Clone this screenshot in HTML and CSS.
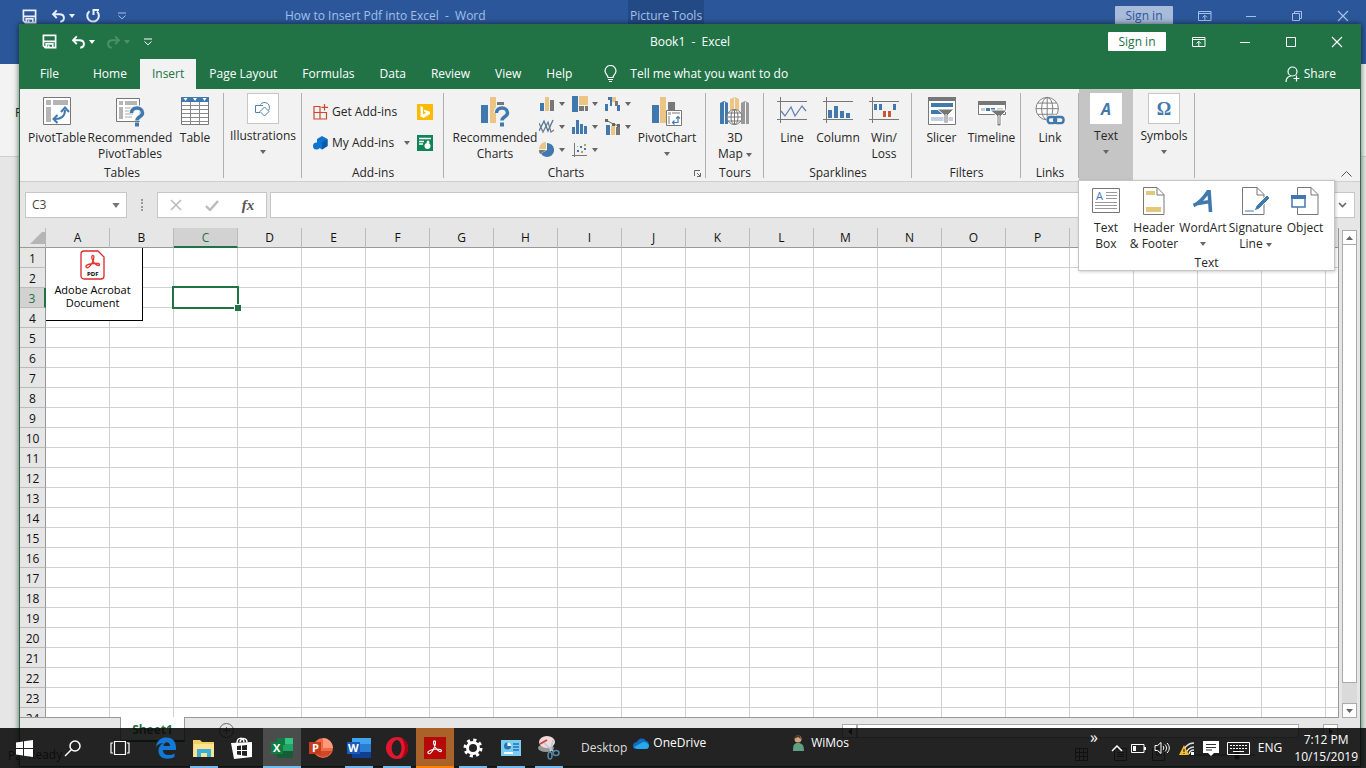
FILE: index.html
```
<!DOCTYPE html>
<html lang="en">
<head>
  <meta charset="utf-8">
  <title>Book1 - Excel</title>
  <link rel="stylesheet" href="styles.css">
</head>
<body>
  <!-- shared icons -->
  <svg class="defs" width="0" height="0">
    <symbol id="save" viewBox="0 0 16 16"><path d="M2 1.500h12.500v13H3.500L1.500 12.500V1.500zM2 7.800h12M4.500 14.500v-4h7v4" fill="none" stroke="currentColor" stroke-width="1.800"/><path d="M6 12h2v3H6z" fill="currentColor"/></symbol>
    <symbol id="undo" viewBox="0 0 16 16"><path d="M2 6h7c7 0 6.500 8 1 8.500M6 1.500L1.800 6 6 10.500" fill="none" stroke="currentColor" stroke-width="2.200"/></symbol>
    <symbol id="redo" viewBox="0 0 16 16"><path d="M14 6H7c-7 0-6.500 8-1 8.500M10 1.500L14.200 6 10 10.500" fill="none" stroke="currentColor" stroke-width="2.200"/></symbol>
    <symbol id="repeat" viewBox="0 0 16 16"><path d="M4.500 3.200A5.800 5.800 0 1 0 12 3.500M8.500 1v6M8 2h6" fill="none" stroke="currentColor" stroke-width="2"/></symbol>
    <symbol id="more" viewBox="0 0 10 8"><path d="M1 1h8M1.500 3.500L5 6.800 8.500 3.500" fill="none" stroke="currentColor"/></symbol>
    <symbol id="down" viewBox="0 0 6 4"><path d="M0 0h6L3 4z" fill="currentColor"/></symbol>
    <symbol id="ribbonopt" viewBox="0 0 14 12"><path d="M.5 1.500h12.500v9H.5zM.5 3.500H13M6.800 10V5.500M4.500 7.500l2.300-2.300 2.300 2.300" fill="none" stroke="currentColor"/></symbol>
    <symbol id="min" viewBox="0 0 12 12"><path d="M1 6.500h10" stroke="currentColor"/></symbol>
    <symbol id="max" viewBox="0 0 12 12"><path d="M1.500 1.500h9v9h-9z" fill="none" stroke="currentColor"/></symbol>
    <symbol id="restore" viewBox="0 0 12 12"><path d="M1.500 3.500h7v7h-7zM3.500 3V1.500h7v7H9" fill="none" stroke="currentColor"/></symbol>
    <symbol id="close" viewBox="0 0 12 12"><path d="M1 1l10 10M11 1L1 11" stroke="currentColor" stroke-width="1.200"/></symbol>
  </svg>

  <div class="window word">
    <header class="word-title">
      <div class="quick">
        <button class="q-btn" aria-label="Save"><svg width="15" height="15"><use href="#save"/></svg></button>
        <button class="q-btn" aria-label="Undo"><svg width="15" height="14"><use href="#undo"/></svg></button>
        <svg class="q-arrow" width="6" height="4"><use href="#down"/></svg>
        <button class="q-btn" aria-label="Repeat"><svg width="16" height="16"><use href="#repeat"/></svg></button>
        <button class="q-btn" aria-label="Customize"><svg width="10" height="8"><use href="#more"/></svg></button>
      </div>
      <h2 class="doc-name">How to Insert Pdf into Excel&nbsp; -&nbsp; Word</h2>
      <span class="picture-tools">Picture Tools</span>
      <button class="sign-in">Sign in</button>
      <button class="win-btn" aria-label="Ribbon options"><svg width="14" height="12"><use href="#ribbonopt"/></svg></button>
      <button class="win-btn" aria-label="Minimize"><svg width="12" height="12"><use href="#min"/></svg></button>
      <button class="win-btn" aria-label="Restore"><svg width="12" height="12"><use href="#restore"/></svg></button>
      <button class="win-btn" aria-label="Close"><svg width="12" height="12"><use href="#close"/></svg></button>
    </header>
    <div class="word-ribbon">Paste</div>
    <div class="word-status">Page</div>
  </div>

  <div class="window excel">
    <header class="title-bar">
      <div class="quick">
        <button class="q-btn" aria-label="Save"><svg width="15" height="15"><use href="#save"/></svg></button>
        <button class="q-btn" aria-label="Undo"><svg width="15" height="14"><use href="#undo"/></svg></button>
        <svg class="q-arrow" width="6" height="4"><use href="#down"/></svg>
        <button class="q-btn dim" aria-label="Redo"><svg width="15" height="14"><use href="#redo"/></svg></button>
        <svg class="q-arrow dim" width="6" height="4"><use href="#down"/></svg>
        <button class="q-btn" aria-label="Customize"><svg width="10" height="8"><use href="#more"/></svg></button>
      </div>
      <h1 class="book-name">Book1&nbsp; -&nbsp; Excel</h1>
      <button class="sign-in">Sign in</button>
      <button class="win-btn" aria-label="Ribbon options"><svg width="14" height="12"><use href="#ribbonopt"/></svg></button>
      <button class="win-btn" aria-label="Minimize"><svg width="12" height="12"><use href="#min"/></svg></button>
      <button class="win-btn" aria-label="Maximize"><svg width="12" height="12"><use href="#max"/></svg></button>
      <button class="win-btn" aria-label="Close"><svg width="12" height="12"><use href="#close"/></svg></button>
    </header>

    <nav class="tabs">
      <button class="tab file">File</button>
      <button class="tab">Home</button>
      <button class="tab active">Insert</button>
      <button class="tab">Page Layout</button>
      <button class="tab">Formulas</button>
      <button class="tab">Data</button>
      <button class="tab">Review</button>
      <button class="tab">View</button>
      <button class="tab">Help</button>
      <button class="tell-me">
        <svg width="13" height="18" viewBox="0 0 13 18" fill="none" stroke="currentColor"><path d="M4 12.500C4 10 1 9 1 6a5.500 5.500 0 0 1 11 0c0 3-3 4-3 6.500zM4 14.500h5M5 16.500h3" stroke-width="1.200"/></svg>
        Tell me what you want to do
      </button>
      <button class="share">
        <svg width="15" height="17" viewBox="0 0 15 17" fill="none" stroke="currentColor" stroke-width="1.200"><circle cx="7.500" cy="5.500" r="4.500"/><path d="M1 16c0-3.500 2-5.500 5-6M8.500 12.500h6M11.500 9.500v6"/></svg>
        Share
      </button>
    </nav>

    <div class="ribbon">
      <section class="group tables">
        <div class="items">
          <button class="big">
            <svg width="28" height="28" viewBox="0 0 28 28"><path d="M.5.500h27v27H.5z" fill="#fff" stroke="#777"/><path d="M3 3h5v5H3zM10 3h15v5H10zM3 10h5v15H3z" fill="#b5b5b5"/><path d="M12 22c7 0 10-3 10-9" fill="none" stroke="#4179ae" stroke-width="2"/><path d="M14.500 18L10.500 22l4 4M18 15l4-4.500 4 4.500" fill="none" stroke="#4179ae" stroke-width="2"/></svg>
            <span>PivotTable</span>
          </button>
          <button class="big wide">
            <svg width="28" height="28" viewBox="0 0 28 28"><path d="M.5 1.500h23v23H.5z" fill="#fff" stroke="#777"/><path d="M3 4h4v4H3zM9 4h12v4H9zM3 10h4v12H3z" fill="#b5b5b5"/><path d="M9 11h8M9 14h7M9 17h8M9 20h7" stroke="#aaa"/><path d="M15.500 16c0-7 11-6.500 11 0 0 4-5.500 3.500-5.500 8" fill="none" stroke="#f2f2f2" stroke-width="6"/><path d="M15.500 16c0-7 11-6.500 11 0 0 4-5.500 3.500-5.500 7.500" fill="none" stroke="#4179ae" stroke-width="3.500"/><path d="M19 25.500h4v4h-4z" fill="#4179ae"/></svg>
            <span>Recommended<br>PivotTables</span>
          </button>
          <button class="big narrow">
            <svg width="28" height="28" viewBox="0 0 28 28"><path d="M.5.500h27v27H.5z" fill="#fff" stroke="#777"/><path d="M0 0h28v5H0z" fill="#4179ae"/><path d="M2.500 1h4l-2 3zM12 1h4l-2 3zM21.500 1h4l-2 3z" fill="#fff"/><path d="M1 8.500h26M1 12.500h26M1 16.500h26M1 20.500h26M1 24.500h26M9.500 5v22M18.500 5v22" stroke="#8a8a8a"/></svg>
            <span>Table</span>
          </button>
        </div>
        <div class="group-name">Tables</div>
      </section>

      <section class="group illustrations">
        <button class="collapsed">
          <span class="tile"><svg width="18" height="16" viewBox="0 0 18 16" fill="none" stroke="#4f80aa"><path d="M6 11.500H1.500v-7H9"/><path d="M6.500 3.500a5 5 0 1 1 8 6"/><path d="M10.500 6l4.500 4.500-4.500 4.500L6 10.500z"/></svg></span>
          Illustrations
          <svg class="arrow" width="6" height="4"><use href="#down"/></svg>
        </button>
      </section>

      <section class="group addins">
        <div class="items addin-list">
          <button class="small">
            <svg width="16" height="16" viewBox="0 0 16 16" fill="none" stroke="#c8492c" stroke-width="1.200"><path d="M1 2.500h6v12.500H1zM1 8.500h12.500V15H7V8.500M11.500 0v6.500M8.500 3.300h6.500"/></svg>
            Get Add-ins
          </button>
          <button class="square" aria-label="Bing Maps"><svg width="16" height="16" viewBox="0 0 16 16"><path d="M0 0h16v16H0z" fill="#fbb900"/><path d="M3.500 2l2.500 1v7.500l3-1.800-1.600-1L6.500 5.500l6.500 2.200V10l-6.500 4-3-1.500z" fill="#fff"/></svg></button>
          <button class="small">
            <svg width="16" height="16" viewBox="0 0 16 16"><path d="M9 1l5.500 3v7L9 14.500 4 11.500V4z" fill="#0c74d0"/><path d="M9 7.500l5.500-3.500v7L9 14.500z" fill="#075ba9"/><circle cx="3.500" cy="11" r="3.500" fill="#0c74d0"/></svg>
            My Add-ins
            <svg class="arrow" width="6" height="4"><use href="#down"/></svg>
          </button>
          <button class="square" aria-label="People Graph"><svg width="16" height="16" viewBox="0 0 16 16"><path d="M0 0h16v16H0z" fill="#0f8457"/><path d="M2 3.500h12M2 6.500h5M2 9h4" stroke="#fff" stroke-width="1.300"/><circle cx="11" cy="7" r="1.500" fill="#fff"/><circle cx="10.500" cy="11" r="3" fill="#fff"/></svg></button>
        </div>
        <div class="group-name">Add-ins</div>
      </section>

      <section class="group charts">
        <div class="items">
          <button class="big wide">
            <svg width="28" height="28" viewBox="0 0 28 28"><path d="M0 8h7v18H0z" fill="#4179ae"/><path d="M9 0h6v26H9z" fill="#ecc483"/><path d="M16 5h7v3h-7z" fill="#777"/><path d="M15.500 16c0-7 11-6.500 11 0 0 4-5.500 3.500-5.500 8" fill="none" stroke="#f2f2f2" stroke-width="6"/><path d="M15.500 16c0-7 11-6.500 11 0 0 4-5.500 3.500-5.500 7.500" fill="none" stroke="#4179ae" stroke-width="3.500"/><path d="M19 25.500h4v4h-4z" fill="#4179ae"/></svg>
            <span>Recommended<br>Charts</span>
          </button>
          <div class="chart-grid">
            <button class="chart-btn" aria-label="Column chart"><svg width="16" height="16" viewBox="0 0 16 16"><path d="M1 7h4v8H1z" fill="#4179ae"/><path d="M6 1h4v14H6z" fill="#ecc483"/><path d="M11 4h4v11h-4z" fill="#777"/></svg><svg class="arrow" width="6" height="4"><use href="#down"/></svg></button>
            <button class="chart-btn" aria-label="Hierarchy chart"><svg width="16" height="16" viewBox="0 0 16 16"><path d="M0 0h6v16H0z" fill="#4179ae"/><path d="M7 0h9v9H7z" fill="#ecc483"/><path d="M7 10h5v5H7zM13 10h3v5h-3z" fill="#777"/></svg><svg class="arrow" width="6" height="4"><use href="#down"/></svg></button>
            <button class="chart-btn" aria-label="Waterfall chart"><svg width="16" height="16" viewBox="0 0 16 16"><path d="M0 8h3v7H0zM3 1h4v9H5V4H3zM12 9h3v6h-3z" fill="#4179ae"/><path d="M7 1h4v5H7z" fill="#ecc483"/><path d="M10 5h3v5h-3z" fill="#777"/></svg><svg class="arrow" width="6" height="4"><use href="#down"/></svg></button>
            <button class="chart-btn" aria-label="Line chart"><svg width="16" height="16" viewBox="0 0 16 16" fill="none"><path d="M0 12L5 2l4 10 5-11" stroke="#4179ae" stroke-width="1.300"/><path d="M0 4l4 9 5-10 3 10 3-2" stroke="#777" stroke-width="1.200"/></svg><svg class="arrow" width="6" height="4"><use href="#down"/></svg></button>
            <button class="chart-btn" aria-label="Statistic chart"><svg width="16" height="16" viewBox="0 0 16 16"><path d="M0 8h3v7H0zM4 1h3v14H4zM8 5h3v10H8zM12 7h3v8h-3z" fill="#4179ae"/></svg><svg class="arrow" width="6" height="4"><use href="#down"/></svg></button>
            <button class="chart-btn" aria-label="Combo chart"><svg width="16" height="16" viewBox="0 0 16 16"><path d="M1 6h4v10H1z" fill="#4179ae"/><path d="M6 7h4v9H6z" fill="#ecc483"/><path d="M11 8h4v8h-4z" fill="#777"/><path d="M1 1l7 4 6 2" fill="none" stroke="#666"/><path d="M0 0h3v3H0zM7 4h3v3H7zM12 5h3v3h-3z" fill="#666"/></svg><svg class="arrow" width="6" height="4"><use href="#down"/></svg></button>
            <button class="chart-btn" aria-label="Pie chart"><svg width="16" height="16" viewBox="0 0 16 16"><path d="M8 8V1a7 7 0 1 1-6 10.500z" fill="#4179ae"/><path d="M7 7V0a7 7 0 0 0-7 7z" fill="#ecc483"/><path d="M7 8H0c0 2 .5 3 1.200 4z" fill="#777"/></svg><svg class="arrow" width="6" height="4"><use href="#down"/></svg></button>
            <button class="chart-btn" aria-label="Scatter chart"><svg width="16" height="16" viewBox="0 0 16 16"><path d="M2.500 1v14M0 13.500h15" stroke="#777"/><path d="M5 8h2v2H5zM8 4h2v2H8zM12 6h2v2h-2z" fill="#4179ae"/><path d="M9 9h2v2H9zM12 2h2v2h-2zM5 4h1v1H5z" fill="#c49a59"/></svg><svg class="arrow" width="6" height="4"><use href="#down"/></svg></button>
          </div>
          <button class="big pivot-chart">
            <svg width="30" height="28" viewBox="0 0 30 28"><path d="M0 8h7v18H0z" fill="#4179ae"/><path d="M8 0h6v26H8z" fill="#ecc483"/><path d="M16 5h7v8h-7z" fill="#777"/><path d="M14.500 13.500h15v15h-15z" fill="#fff" stroke="#777"/><path d="M16 15h3v3h-3zM20 15h8v2h-8zM16 19h2v8h-2z" fill="#bbb"/><path d="M20.500 25.500H26V20M22.500 23.500l-2 2 2 2M24 21.500l2-2 2 2" fill="none" stroke="#4179ae" stroke-width="1.200"/></svg>
            <span>PivotChart</span>
            <svg class="arrow" width="6" height="4"><use href="#down"/></svg>
          </button>
        </div>
        <div class="group-name">Charts</div>
        <button class="launcher" aria-label="Chart options"><svg width="7" height="7" viewBox="0 0 7 7"><path d="M.5 6V.500H6M3 3l3 3M6.500 3v3.500H3" fill="none" stroke="#666"/></svg></button>
      </section>

      <section class="group tours">
        <div class="items">
          <button class="big">
            <svg width="30" height="28" viewBox="0 0 30 28"><path d="M0 6l4-2 4 2v21H0z" fill="#4179ae"/><path d="M10 2l5-2 4 2v14h-9z" fill="#ecc483"/><path d="M21 6l4-2 4 2v21h-8z" fill="#999"/><path d="M4.500 5v22M14.500 1v14M25.500 5v22" stroke="#f2f2f2"/><circle cx="14.500" cy="20" r="7.500" fill="#fff" stroke="#777"/><ellipse cx="14.500" cy="20" rx="3.500" ry="7.500" fill="none" stroke="#777"/><path d="M7 20h15M8.500 16h12M8.500 24h12M14.500 13v14" stroke="#777"/></svg>
            <span>3D<br>Map <svg class="inline-arrow" width="6" height="4"><use href="#down"/></svg></span>
          </button>
        </div>
        <div class="group-name">Tours</div>
      </section>

      <section class="group sparklines">
        <div class="items">
          <button class="big">
            <svg width="30" height="28" viewBox="0 0 30 28" fill="none"><path d="M0 4.500h30M0 22.500h30M3.500 0v26" stroke="#777"/><path d="M4 14l4 5 6-9 4 9 7-10 4 5" stroke="#6484b0" stroke-width="1.300"/></svg>
            <span>Line</span>
          </button>
          <button class="big">
            <svg width="30" height="28" viewBox="0 0 30 28"><path d="M5 13h4v8H5zM11 9h4v12h-4zM17 14h4v7h-4zM23 16h4v5h-4z" fill="#4179ae"/><path d="M0 4.500h30M0 22.500h30M3.500 0v26" stroke="#777"/></svg>
            <span>Column</span>
          </button>
          <button class="big">
            <svg width="30" height="28" viewBox="0 0 30 28"><path d="M5 7h3v6H5zM10 7h3v6h-3zM24 7h3v6h-3z" fill="#4179ae"/><path d="M14 14h3v6h-3zM19 14h3v6h-3z" fill="#c8573a"/><path d="M0 4.500h30M0 22.500h30M3.500 0v26" stroke="#777"/></svg>
            <span>Win/<br>Loss</span>
          </button>
        </div>
        <div class="group-name">Sparklines</div>
      </section>

      <section class="group filters">
        <div class="items">
          <button class="big">
            <svg width="28" height="28" viewBox="0 0 28 28"><path d="M.5.500h27v27H.5z" fill="#fff" stroke="#777"/><path d="M0 0h28v4H0z" fill="#777"/><path d="M3 6h22v4H3zM3 13h12v4H3z" fill="#4179ae"/><path d="M3 20h22v4H3z" fill="#c5cfdf"/><path d="M9 12h17l-6 6v8h-4v-8z" fill="#777" stroke="#fff"/><path d="M18 17v8" stroke="#fff"/></svg>
            <span>Slicer</span>
          </button>
          <button class="big">
            <svg width="28" height="28" viewBox="0 0 28 28"><path d="M.5 4.500h27v13H.5z" fill="#fff" stroke="#777"/><path d="M0 4h28v4H0z" fill="#777"/><path d="M3 11h4v3H3zM19 11h6v3h-6z" fill="#ccc"/><path d="M8 11h4v3H8zM13 11h4v3h-4z" fill="#4179ae"/><path d="M12 13h17l-6 6v10h-4V19z" fill="#777" stroke="#fff"/><path d="M21 18v9" stroke="#fff"/></svg>
            <span>Timeline</span>
          </button>
        </div>
        <div class="group-name">Filters</div>
      </section>

      <section class="group links">
        <div class="items">
          <button class="big">
            <svg width="32" height="30" viewBox="0 0 32 30" fill="none"><circle cx="13" cy="12.500" r="12" fill="#fff" stroke="#777"/><ellipse cx="13" cy="12.500" rx="6" ry="12" stroke="#777"/><path d="M13 .5v24M1 12.500h24M3 6.500h20M3 18.500h20" stroke="#777"/><rect x="12" y="19" width="20" height="11" rx="5" fill="#f2f2f2"/><g stroke="#4179ae" stroke-width="2.600"><rect x="13.500" y="21.500" width="9" height="6.500" rx="3"/><rect x="20.500" y="21.500" width="10" height="6.500" rx="3"/></g></svg>
            <span>Link</span>
          </button>
        </div>
        <div class="group-name">Links</div>
      </section>

      <section class="group text-group">
        <button class="collapsed open">
          <span class="tile letter">A</span>
          Text
          <svg class="arrow" width="6" height="4"><use href="#down"/></svg>
        </button>
        <div class="menu">
          <div class="menu-items">
            <button class="big text-box">
              <svg width="28" height="28" viewBox="0 0 28 28"><path d="M.5 1.500h27v24H.5z" fill="#fff" stroke="#777"/><path d="M14 5.500h11M14 8.500h11M14 11.500h11M3 15.500h22M3 18.500h22M3 21.500h22" stroke="#999"/><text x="4" y="13" class="a-icon">A</text></svg>
              <span>Text<br>Box</span>
            </button>
            <button class="big header-footer">
              <svg width="22" height="28" viewBox="0 0 22 28"><path d="M.5.500H14l7 7v20H.5z" fill="#fff" stroke="#777"/><path d="M14 .5V8h7" fill="none" stroke="#777"/><path d="M3 4h9v4H3zM3 20h15v5H3z" fill="#e2c77d"/></svg>
              <span>Header<br>&amp; Footer</span>
            </button>
            <button class="big">
              <svg width="22" height="28" viewBox="0 0 22 28"><path d="M1.500 18.500C8 16 12 11 16.500 4M17 3l1.500 22M6 16.500l12-2" fill="none" stroke="#4179ae" stroke-width="3.600"/></svg>
              <span>WordArt</span>
              <svg class="arrow" width="6" height="4"><use href="#down"/></svg>
            </button>
            <button class="big signature">
              <svg width="28" height="28" viewBox="0 0 28 28"><path d="M.5.500H15l7 7v20H.5z" fill="#fff" stroke="#777"/><path d="M15 .5V8h7" fill="none" stroke="#777"/><path d="M3 24h9" stroke="#4179ae"/><path d="M12 24l2-5L25 8l3 3-11 11z" fill="#4179ae" stroke="#fff"/></svg>
              <span>Signature<br>Line <svg class="inline-arrow" width="6" height="4"><use href="#down"/></svg></span>
            </button>
            <button class="big object">
              <svg width="28" height="28" viewBox="0 0 28 28"><path d="M6.500.500H20l7 7v20H6.500z" fill="#fff" stroke="#777"/><path d="M20 .5V8h7" fill="none" stroke="#777"/><path d="M1 9h13v11H1z" fill="#fff" stroke="#4179ae" stroke-width="1.500"/><path d="M0 8h15v4H0z" fill="#4179ae"/></svg>
              <span>Object</span>
            </button>
          </div>
          <div class="group-name">Text</div>
        </div>
      </section>

      <section class="group symbols">
        <button class="collapsed">
          <span class="tile omega">Ω</span>
          Symbols
          <svg class="arrow" width="6" height="4"><use href="#down"/></svg>
        </button>
      </section>
      <button class="collapse" aria-label="Collapse the ribbon"><svg width="11" height="6" viewBox="0 0 11 6"><path d="M.5 5.500l5-5 5 5" fill="none" stroke="#555"/></svg></button>
    </div>

    <div class="formula-bar">
      <div class="name-box">
        <input type="text" value="C3" aria-label="Name box">
        <svg width="8" height="5" viewBox="0 0 6 4"><use href="#down"/></svg>
      </div>
      <span class="dots"></span>
      <div class="fx-buttons">
        <button aria-label="Cancel"><svg width="12" height="12" viewBox="0 0 12 12"><path d="M1 1l10 10M11 1L1 11" stroke="#bbb" stroke-width="1.600"/></svg></button>
        <button aria-label="Enter"><svg width="14" height="11" viewBox="0 0 14 11"><path d="M1 6l4 4 8-9" fill="none" stroke="#bbb" stroke-width="2.400"/></svg></button>
        <button class="fx">fx</button>
      </div>
      <div class="formula">
        <input type="text" aria-label="Formula bar">
        <button aria-label="Expand"><svg width="9" height="6" viewBox="0 0 9 6"><path d="M1 1l3.500 3.500L8 1" fill="none" stroke="#666" stroke-width="1.600"/></svg></button>
      </div>
    </div>

    <div class="sheet-area">
      <div class="sheet">
        <table class="grid" id="grid"></table>
        <div class="pdf-object">
          <svg width="26" height="30" viewBox="0 0 26 30"><path d="M4 1h14l6 6v19a3 3 0 0 1-3 3H4a3 3 0 0 1-3-3V4a3 3 0 0 1 3-3z" fill="#fff" stroke="#d8292b" stroke-width="1.300"/><path d="M12 6c2-2 3 2 0 7-2 4-5 6-6 4s4-3 7-3.500c4-.5 7 0 6.500 1.500-.5 2-5-1-6.500-4-1-2-1.500-4-1-5z" fill="none" stroke="#e8322c" stroke-width="1.300"/><text x="7" y="26" class="pdf-text">PDF</text></svg>
          <span>Adobe Acrobat<br>Document</span>
        </div>
      </div>
      <div class="v-scroll">
        <button aria-label="Scroll up"><svg width="7" height="4" viewBox="0 0 7 4"><path d="M0 4h7L3.500 0z" fill="#666"/></svg></button>
        <div class="v-thumb"></div>
        <div class="v-track"></div>
        <button aria-label="Scroll down"><svg width="7" height="4" viewBox="0 0 7 4"><path d="M0 0h7L3.500 4z" fill="#666"/></svg></button>
      </div>
    </div>

    <div class="sheet-tabs">
      <button class="sheet-tab">Sheet1</button>
      <button class="add-sheet" aria-label="New sheet"><svg width="15" height="15" viewBox="0 0 15 15" fill="none" stroke="#666"><circle cx="7.500" cy="7.500" r="7"/><path d="M7.500 4v7M4 7.500h7"/></svg></button>
      <div class="h-scroll">
        <button aria-label="Scroll left"><svg width="4" height="7" viewBox="0 0 4 7"><path d="M4 0v7L0 3.500z" fill="#333"/></svg></button>
        <div class="h-thumb"></div>
        <button aria-label="Scroll right"><svg width="4" height="7" viewBox="0 0 4 7"><path d="M0 0v7l4-3.500z" fill="#333"/></svg></button>
      </div>
    </div>
    <footer class="status">
      <span>Ready</span>
      <svg width="180" height="14" viewBox="0 0 180 14" fill="none" stroke="#555"><path d="M.5.500h12v12H.5zM.5 4.500h12M.5 8.500h12M4.500.500v12M8.500.500v12M39.500.500h12v12h-12zM42 4.500h7M42 6.500h7M42 8.500h7M77.500.500h12v12h-12zM81.500 1v6h5V1M110 7h70"/><path d="M160 2h4v9h-4z" fill="#333"/></svg>
    </footer>
  </div>

  <footer class="taskbar">
    <button class="task start" aria-label="Start"><svg width="17" height="17" viewBox="0 0 17 17"><path d="M0 2.500l7-1V8H0zM8 1.300L17 0v8H8zM0 9h7v6.500l-7-1zM8 9h9v8l-9-1.300z" fill="#fff"/></svg></button>
    <button class="task start" aria-label="Search"><svg width="17" height="17" viewBox="0 0 17 17" fill="none" stroke="#fff" stroke-width="1.500"><circle cx="11" cy="6" r="5"/><path d="M7.500 9.500L1 16"/></svg></button>
    <button class="task view" aria-label="Task view"><svg width="20" height="16" viewBox="0 0 20 16" fill="none" stroke="#fff" stroke-width="1.200"><path d="M4.500 1.500h11v13h-11zM3 3H1v10h2M17 3h2v10h-2"/></svg></button>
    <button class="task" aria-label="Edge"><svg width="22" height="22" viewBox="0 0 22 22"><path d="M1 10C2 3 6 .5 11.500.500 18 .5 21 5 21 10.500V13H8c0 6 7 6 11.500 3.500V20C12 23.500 3 21.500 3.500 13 4 9 6.500 6.500 9 6 5.500 6 2.500 7.500 1 10zm7.500-1H15c0-5-6-5-6.500 0z" fill="#1279d7" fill-rule="evenodd"/></svg></button>
    <button class="task running" aria-label="File Explorer"><svg width="22" height="20" viewBox="0 0 22 20"><path d="M0 2h7l2 2h12v14H0z" fill="#f3cf62"/><path d="M1 6h20v13H0z" fill="#ffe292"/><path d="M4 11h14v8h-4v-4H8v4H4z" fill="#36b1dc"/></svg></button>
    <button class="task" aria-label="Store"><svg width="22" height="22" viewBox="0 0 22 22"><path d="M0 6l21-1v15L3 22z" fill="#fff"/><path d="M6 6c0-6 6-6 7-1M9 5c1-5 7-4 7 0" fill="none" stroke="#fff" stroke-width="1.500"/><path d="M6 9l4-.5V13H6zM11 8.500l5-.5v5h-5zM6 14h4v4l-4-.5zM11 14h5v5l-5-.5z" fill="#222"/></svg></button>
    <button class="task current" aria-label="Excel"><svg width="22" height="20" viewBox="0 0 22 20"><path d="M6 0h16v20H6z" fill="#21a366"/><path d="M6 0h8v7H6z" fill="#107c41"/><path d="M14 0h8v6h-8z" fill="#33c481"/><path d="M6 13h16v7H6z" fill="#185c37"/><path d="M0 4h12v12H0z" fill="#107c41"/><text x="2" y="14" class="logo">X</text></svg></button>
    <button class="task" aria-label="PowerPoint"><svg width="24" height="20" viewBox="0 0 24 20"><circle cx="14" cy="10" r="10" fill="#ed6c47"/><path d="M14 0a10 10 0 0 1 10 10H14z" fill="#ff9a7b"/><path d="M5 13h18a10 10 0 0 1-18 0z" fill="#d24726"/><path d="M0 4h12v12H0z" fill="#c43e1c"/><text x="3" y="14" class="logo">P</text></svg></button>
    <button class="task running" aria-label="Word"><svg width="24" height="20" viewBox="0 0 24 20"><path d="M5 0h19v20H5z" fill="#2b7cd3"/><path d="M5 0h19v6H5z" fill="#41a5ee"/><path d="M5 14h19v6H5z" fill="#103f91"/><path d="M0 4h13v12H0z" fill="#185abd"/><text x="1" y="14" class="logo">W</text></svg></button>
    <button class="task running" aria-label="Opera"><svg width="22" height="22" viewBox="0 0 22 22"><path d="M11 0a11 11 0 1 1 0 22 11 11 0 0 1 0-22zm0 3c-7 1-7 15 0 16 6-1 6-15 0-16z" fill="#e3172d" fill-rule="evenodd"/><path d="M15 1c10 4 9 17 0 20 5-5 5-15 0-20z" fill="#a70014"/></svg></button>
    <button class="task acrobat" aria-label="Acrobat"><svg width="22" height="22" viewBox="0 0 22 22"><path d="M0 0h22v22H0z" fill="#b50a08"/><path d="M10 4c2-1 2 3 0 7-2 5-5 7-6 5s4-3.500 8-4c4 0 6 1 5.500 2-1 1.500-4-.500-6-3.500C10 8 9 5 10 4z" fill="none" stroke="#fff" stroke-width="1.200"/></svg></button>
    <button class="task running" aria-label="Settings"><svg width="20" height="20" viewBox="0 0 20 20" fill="none" stroke="#fff"><circle cx="10" cy="10" r="5.500" stroke-width="3"/><circle cx="10" cy="10" r="8" stroke-width="3" stroke-dasharray="3.140 3.140"/></svg></button>
    <button class="task running" aria-label="Control Panel"><svg width="20" height="16" viewBox="0 0 20 16"><path d="M0 0h20v16H0z" fill="#7bcdf2"/><circle cx="6.500" cy="6" r="3.500" fill="#2374b8"/><path d="M6.500 6V2.500A3.500 3.500 0 0 1 10 6z" fill="#fff"/><path d="M12 4h6M12 7h6M12 10h6" stroke="#2374b8" stroke-width="1.500"/><path d="M3 13h9" stroke="#fff" stroke-width="2"/></svg></button>
    <button class="task running" aria-label="Snipping Tool"><svg width="22" height="24" viewBox="0 0 22 24"><ellipse cx="8" cy="12" rx="8" ry="4" fill="#999"/><ellipse cx="9" cy="6" rx="8" ry="6" fill="#f1dada"/><path d="M2 8l7-4" stroke="#d64045" stroke-width="2"/><path d="M6 7l10 9M15 4l-3 12" stroke="#b9c8d2" stroke-width="1.500"/><ellipse cx="18" cy="17" rx="3" ry="2.500" fill="none" stroke="#5686a5" stroke-width="1.500"/><ellipse cx="12" cy="19.500" rx="2" ry="3.500" fill="none" stroke="#5686a5" stroke-width="1.500"/></svg></button>
    <span class="desktop-label">Desktop</span>
    <a class="toolbar-link onedrive" href="#"><svg width="16" height="11" viewBox="0 0 16 11"><path d="M0 8c0-3 2-4 4-4 1-4 7-5 9-1 3 0 4 5 1 8H3C1 11 0 10 0 8z" fill="#0f6cc0"/><path d="M1 9l9-5c3 0 6 2 6 4 0 1.500-1 3-3 3H4z" fill="#28a8ea"/></svg>OneDrive</a>
    <a class="toolbar-link wimos" href="#"><svg width="13" height="16" viewBox="0 0 13 16"><circle cx="6" cy="4" r="3.500" fill="#d2a67c"/><path d="M2 4c0-5 7-5 7 0L6 2z" fill="#4b3527"/><path d="M1 16c0-6 1-8 5-8s6 2 6 8z" fill="#5fa081"/></svg>WiMos</a>
    <div class="tray">
      <span class="chevrons">»</span>
      <svg width="12" height="7" viewBox="0 0 12 7"><path d="M1 6l5-5 5 5" fill="none" stroke="#fff" stroke-width="1.500"/></svg>
      <svg width="15" height="9" viewBox="0 0 15 9"><path d="M.5.500h12.500v8H.5z" fill="none" stroke="#fff"/><path d="M2 2h3v5H2zM13 3h2v3h-2z" fill="#fff"/></svg>
      <svg width="17" height="14" viewBox="0 0 17 14" fill="none" stroke="#fff"><path d="M1 4.500h2.500L7 1.500v11L3.500 9.500H1zM9 5c1 1 1 3 0 4M11 3.500c2 2 2 5 0 7M13 2c3 3 3 7 0 10"/></svg>
      <svg width="16" height="15" viewBox="0 0 16 15"><path d="M4 13A11 11 0 0 1 15 2M7 13a8 8 0 0 1 8-7M10 13a5 5 0 0 1 5-4" fill="none" stroke="#ddd" stroke-width="1.400"/><path d="M12 11h3v3h-3z" fill="#fff"/><path d="M0 14L5 4l5 10z" fill="#f6bd2c"/><path d="M5 8v3M5 12v1" stroke="#333" stroke-width="1.200"/></svg>
      <svg width="16" height="15" viewBox="0 0 16 15"><path d="M0 0h16v12h-5l-3 3-3-3H0z" fill="#fff"/><path d="M3 3.500h10M3 6.500h10M3 9h6" stroke="#333"/></svg>
      <svg width="23" height="13" viewBox="0 0 23 13" fill="none" stroke="#fff"><path d="M.5.500h22v12H.5zM6 9.500h11"/><path d="M3 3.500h17M3 6.500h17" stroke-dasharray="2 1"/></svg>
      <span class="lang">ENG</span>
      <div class="clock">7:12 PM<br>10/15/2019</div>
    </div>
  </footer>

  <script src="grid.js"></script>
</body>
</html>
```

FILE: styles.css
```
* {
  box-sizing: border-box;
}
body {
  margin: 0;
  height: 100vh;
  overflow: hidden;
  position: relative;
  background: #e6e6e6;
  font-family: "Open Sans", "Noto Sans", sans-serif;
  font-size: 12px;
  line-height: 16px;
  color: #262626;
}
button {
  font: inherit;
  color: inherit;
  background: none;
  border: none;
  padding: 0;
}
input {
  font: inherit;
  color: inherit;
  border: none;
  outline: none;
  background: none;
  padding: 0;
  min-width: 0;
}
h1, h2 {
  margin: 0;
  font-size: 12px;
  font-weight: normal;
}
svg {
  display: block;
  flex: none;
}
.defs {
  position: absolute;
}
.window {
  position: absolute;
  display: flex;
  flex-direction: column;
}

/* word window behind */
.word {
  inset: 0;
  background: #e6e6e6;
}
.word-title {
  height: 64px;
  background: #2b579a;
  color: #a5c0ea;
  display: flex;
  align-items: flex-start;
}
.word-title .quick {
  padding-left: 20px;
  color: #e8f0ff;
}
.word-title .q-btn:last-child {
  color: #a5c0ea;
}
.doc-name {
  width: 486px;
  padding: 8px 0 0 143px;
  white-space: nowrap;
}
.picture-tools {
  width: 76px;
  height: 32px;
  padding-top: 8px;
  background: #234a85;
  text-align: center;
  white-space: nowrap;
}
.word-title .sign-in {
  margin: 6px 9px 0 auto;
  background: #a9bbdb;
  color: #2b579a;
}
.word-title .win-btn {
  height: 32px;
}
.word-ribbon {
  height: 93px;
  padding: 41px 0 0 15px;
  background: #f3f3f3;
  border-bottom: 1px solid #d0d0d0;
}
.word-status {
  margin-top: auto;
  padding: 0 0 4px 8px;
}

/* title bar */
.quick {
  display: flex;
  align-items: center;
  height: 32px;
}
.q-btn {
  width: 18px;
  margin-right: 11px;
  display: flex;
  justify-content: center;
}
.q-arrow {
  margin: 0 9px 0 -9px;
}
.dim {
  color: #4b9069;
}
.sign-in {
  width: 58px;
  height: 19px;
  border-radius: 1px;
}
.win-btn {
  width: 46px;
  height: 34px;
  display: flex;
  align-items: center;
  justify-content: center;
}
.excel {
  top: 24px;
  left: 19px;
  right: 5px;
  bottom: 1px;
  background: #e6e6e6;
  border: 1px solid #217346;
  border-top: none;
  box-shadow: 0 0 6px rgba(0, 0, 0, .6);
}
.title-bar {
  height: 35px;
  display: flex;
  align-items: center;
  justify-content: flex-end;
  position: relative;
  background: #217346;
  color: #fff;
}
.title-bar .quick {
  margin-right: auto;
  padding-left: 20px;
}
.book-name {
  position: absolute;
  left: 0;
  right: 0;
  top: 10px;
  text-align: center;
  pointer-events: none;
}
.title-bar .sign-in {
  margin-right: 10px;
  background: #fff;
  color: #217346;
}

/* tabs */
.tabs {
  height: 30px;
  display: flex;
  background: #217346;
  color: #fff;
}
.tab {
  padding: 0 12px;
  margin-right: 1px;
}
.tab.file {
  padding: 0 21px 0 20px;
}
.tab.active {
  background: #f2f2f2;
  color: #217346;
}
.tell-me, .share {
  display: flex;
  align-items: center;
  gap: 13px;
  margin-left: 19px;
}
.share {
  gap: 4px;
  margin-left: auto;
  padding-right: 24px;
}

/* ribbon */
.ribbon {
  height: 93px;
  display: flex;
  position: relative;
  background: #f2f2f2;
  border-bottom: 1px solid #cfcfcf;
}
.group {
  flex: none;
  display: flex;
  flex-direction: column;
  position: relative;
}
.group::after {
  content: "";
  position: absolute;
  top: 4px;
  right: 0;
  bottom: 3px;
  border-right: 1px solid #b0b0b0;
}
.items {
  flex: 1;
  display: flex;
  justify-content: center;
}
.group-name {
  text-align: center;
  height: 16px;
}
.big {
  width: 58px;
  padding-top: 8px;
  display: flex;
  flex-direction: column;
  align-items: center;
  white-space: nowrap;
}
.big > svg:first-child {
  height: 28px;
  margin-bottom: 5px;
  overflow: visible;
}
.big.wide {
  width: 88px;
}
.big.narrow {
  width: 42px;
}
.sparklines .big {
  width: 46px;
}
.filters .big {
  width: 50px;
}
.arrow, .inline-arrow {
  color: #666;
}
.big .arrow {
  margin-top: 6px;
}
.inline-arrow {
  display: inline-block;
  vertical-align: middle;
}
.collapsed {
  height: 92px;
  padding-top: 4px;
  display: flex;
  flex-direction: column;
  align-items: center;
}
.collapsed .arrow {
  margin-top: 6px;
}
.tile {
  width: 32px;
  height: 31px;
  margin-bottom: 4px;
  display: flex;
  align-items: center;
  justify-content: center;
  background: #fff;
  border: 1px solid #c6c6c6;
  color: #4179ae;
  font-weight: bold;
}
.letter {
  font-size: 16px;
  font-style: italic;
}
.omega {
  font-family: "Liberation Serif", serif;
  font-size: 18px;
}
.tables { width: 204px; }
.illustrations { width: 78px; }
.addins { width: 142px; }
.charts { width: 262px; }
.tours { width: 58px; }
.sparklines { width: 148px; }
.filters { width: 109px; }
.links { width: 58px; }
.text-group { width: 54px; }
.symbols { width: 62px; }
.text-group::after {
  display: none;
}
.charts .items {
  justify-content: flex-start;
  padding-left: 7px;
}
.charts .group-name {
  padding-right: 18px;
}
.open {
  background: #c5c5c5;
}
.open .tile {
  border-color: #fff;
}
.addin-list {
  display: grid;
  grid-template-columns: 96px 16px;
  grid-auto-rows: 31px;
  column-gap: 8px;
  justify-content: start;
  padding: 7px 0 0 11px;
}
.small {
  display: flex;
  align-items: center;
  gap: 3px;
  white-space: nowrap;
}
.small .arrow {
  margin-left: 7px;
}
.square {
  display: flex;
  align-items: center;
}
.chart-grid {
  display: grid;
  grid-template-columns: repeat(3, 33px);
  grid-auto-rows: 23px;
  padding-top: 3px;
}
.chart-btn {
  display: flex;
  align-items: center;
  gap: 4px;
}
.launcher {
  position: absolute;
  right: 5px;
  bottom: 4px;
}
.collapse {
  margin: auto 8px 4px auto;
}
.menu {
  position: absolute;
  z-index: 5;
  top: 91px;
  left: -1px;
  width: 257px;
  height: 91px;
  background: #fff;
  border: 1px solid #c6c6c6;
  box-shadow: 1px 1px 3px rgba(0, 0, 0, .2);
}
.menu-items {
  display: flex;
  height: 74px;
  padding-left: 4px;
}
.menu .big {
  width: 48px;
  padding-top: 6px;
}
.menu .text-box {
  width: 46px;
}
.menu .header-footer {
  width: 50px;
}
.menu .signature {
  width: 57px;
}
.menu .object {
  width: 42px;
}
.a-icon {
  font-size: 11px;
  fill: #4179ae;
}

/* formula bar */
.formula-bar {
  display: flex;
  align-items: center;
  height: 46px;
  padding: 0 5px;
}
.name-box, .fx-buttons, .formula {
  height: 26px;
  display: flex;
  align-items: center;
  background: #fff;
  border: 1px solid #c6c6c6;
}
.name-box {
  width: 102px;
  padding: 0 6px;
  color: #444;
}
.name-box input {
  flex: 1;
}
.name-box svg {
  color: #777;
}
.dots {
  width: 2px;
  height: 12px;
  margin: 0 14px;
  border-left: 2px dotted #999;
}
.fx-buttons {
  width: 110px;
  margin-right: 3px;
}
.fx-buttons button {
  flex: 1;
  display: flex;
  justify-content: center;
  align-items: center;
}
.fx-buttons .fx {
  font-family: "Liberation Serif", serif;
  font-size: 15px;
  font-style: italic;
  font-weight: bold;
  color: #555;
}
.formula {
  flex: 1;
}
.formula input {
  flex: 1;
}
.formula button {
  width: 16px;
}

/* grid */
.sheet-area {
  flex: 1;
  min-height: 0;
  display: flex;
  justify-content: space-between;
  padding-right: 3px;
}
.sheet {
  position: relative;
  width: calc(100% - 18px);
  overflow: hidden;
  border-right: 1px solid #999;
  border-bottom: 1px solid #999;
}
.grid {
  table-layout: fixed;
  width: 1370px;
  border-collapse: separate;
  border-spacing: 0;
  background: #fff;
}
.grid th, .grid td {
  height: 20px;
  padding: 0;
  border-right: 1px solid #d0d0d0;
  border-bottom: 1px solid #d0d0d0;
}
.grid th {
  background: #e6e6e6;
  font-weight: normal;
  color: #111;
}
.grid thead th {
  width: 64px;
  padding-top: 1px;
  border-right-color: #bbb;
  border-bottom-color: #999;
}
.grid tbody th {
  padding-top: 2px;
  border-right-color: #999;
  border-bottom-color: #bbb;
}
.grid thead .corner {
  width: 26px;
  vertical-align: bottom;
}
.corner::after {
  content: "";
  display: block;
  width: 12px;
  margin: 0 0 3px 10px;
  border-left: 12px solid transparent;
  border-bottom: 12px solid #b5b5b5;
}
.grid .picked {
  background: #d2d2d2;
  color: #217346;
}
.grid thead .picked {
  border-bottom: 2px solid #217346;
}
.grid tbody .picked {
  border-right: 2px solid #217346;
}
.cell-on {
  position: relative;
}
.cell-on::before {
  content: "";
  position: absolute;
  inset: -2px;
  border: 2px solid #217346;
}
.cell-on::after {
  content: "";
  position: absolute;
  right: -4px;
  bottom: -4px;
  width: 6px;
  height: 6px;
  background: #217346;
  border: 1px solid #fff;
  border-width: 1px 0 0 1px;
}
.pdf-object {
  position: absolute;
  left: 26px;
  top: 20px;
  width: 97px;
  height: 73px;
  padding: 2px 3px 0 0;
  display: flex;
  flex-direction: column;
  align-items: center;
  gap: 3px;
  background: #fff;
  border: solid #000;
  border-width: 0 1px 1px 0;
  font-size: 11px;
  line-height: 13px;
  color: #000;
  text-align: center;
}
.pdf-text {
  font-size: 6px;
  font-weight: bold;
}
.v-scroll {
  width: 15px;
  padding-top: 2px;
  display: flex;
  flex-direction: column;
}
.v-scroll button {
  height: 15px;
  display: flex;
  align-items: center;
  justify-content: center;
  background: #fff;
  border: 1px solid #ababab;
}
.v-thumb {
  flex: 1;
  background: #fff;
  border: 1px solid #ababab;
  border-top: none;
}
.v-track {
  height: 20px;
  background: #dadada;
}

/* sheet tabs and status */
.sheet-tabs {
  height: 24px;
  display: flex;
  align-items: flex-start;
  padding-left: 100px;
}
.sheet-tab {
  width: 65px;
  height: 25px;
  padding-top: 2px;
  margin-top: -1px;
  position: relative;
  background: #fff;
  border: 1px solid #999;
  border-top: none;
  border-bottom: 2px solid #217346;
  font-weight: bold;
  color: #217346;
}
.add-sheet {
  margin: 5px 0 0 34px;
}
.h-scroll {
  display: flex;
  margin: 6px 22px 0 auto;
  width: 496px;
}
.h-scroll button {
  width: 15px;
  height: 14px;
  display: flex;
  align-items: center;
  justify-content: center;
  background: #fff;
  border: 1px solid #ababab;
}
.h-thumb {
  flex: 1;
  margin-right: 24px;
  background: #fff;
  border: 1px solid #ababab;
}
.status {
  height: 24px;
  display: flex;
  align-items: center;
  justify-content: space-between;
  padding: 2px 105px 0 8px;
}

/* taskbar */
.taskbar {
  position: absolute;
  left: 0;
  right: 0;
  bottom: 0;
  height: 40px;
  display: flex;
  background: rgba(8, 8, 8, .88);
  color: #fff;
}
.task {
  flex: none;
  width: 38px;
  display: flex;
  align-items: center;
  justify-content: center;
  position: relative;
}
.task.start {
  width: 48px;
}
.task.view {
  width: 51px;
  padding-right: 3px;
}
.running::after, .current::after, .acrobat::after {
  content: "";
  position: absolute;
  left: 5px;
  right: 5px;
  bottom: 0;
  height: 2px;
  background: #76b9ed;
}
.current::after, .acrobat::after {
  left: 0;
  right: 0;
}
.current {
  margin: 0 1px 0 2px;
  background: #4b4d4c;
}
.acrobat {
  background: #a9622a;
}
.acrobat::after {
  background: #ff8000;
}
.logo {
  font-size: 11px;
  font-weight: bold;
  fill: #fff;
}
.desktop-label {
  padding: 12px 6px 0 13px;
  color: #ddd;
}
.toolbar-link {
  display: flex;
  align-items: center;
  height: 30px;
  gap: 4px;
  color: #fff;
  text-decoration: none;
}
.wimos {
  margin-left: 86px;
  gap: 6px;
}
.tray {
  display: flex;
  align-items: center;
  gap: 8px;
  margin-left: auto;
  padding-right: 8px;
}
.chevrons {
  font-size: 16px;
  padding: 0 5px 22px 0;
}
.clock {
  text-align: center;
  line-height: 17px;
  padding-left: 4px;
}
```

FILE: grid.js
```
const grid = document.getElementById('grid');
const letters = 'ABCDEFGHIJKLMNOPQRSTU';
let html = '<thead><tr><th class="corner"></th>';
for (const letter of letters) {
  html += `<th class="${letter === 'C' ? 'picked' : ''}">${letter}</th>`;
}
html += '</tr></thead><tbody>';
for (let row = 1; row <= 24; row++) {
  html += `<tr><th class="${row === 3 ? 'picked' : ''}">${row}</th>`;
  for (const letter of letters) {
    html += `<td class="${letter + row === 'C3' ? 'cell-on' : ''}"></td>`;
  }
  html += '</tr>';
}
grid.innerHTML = html + '</tbody>';
```
